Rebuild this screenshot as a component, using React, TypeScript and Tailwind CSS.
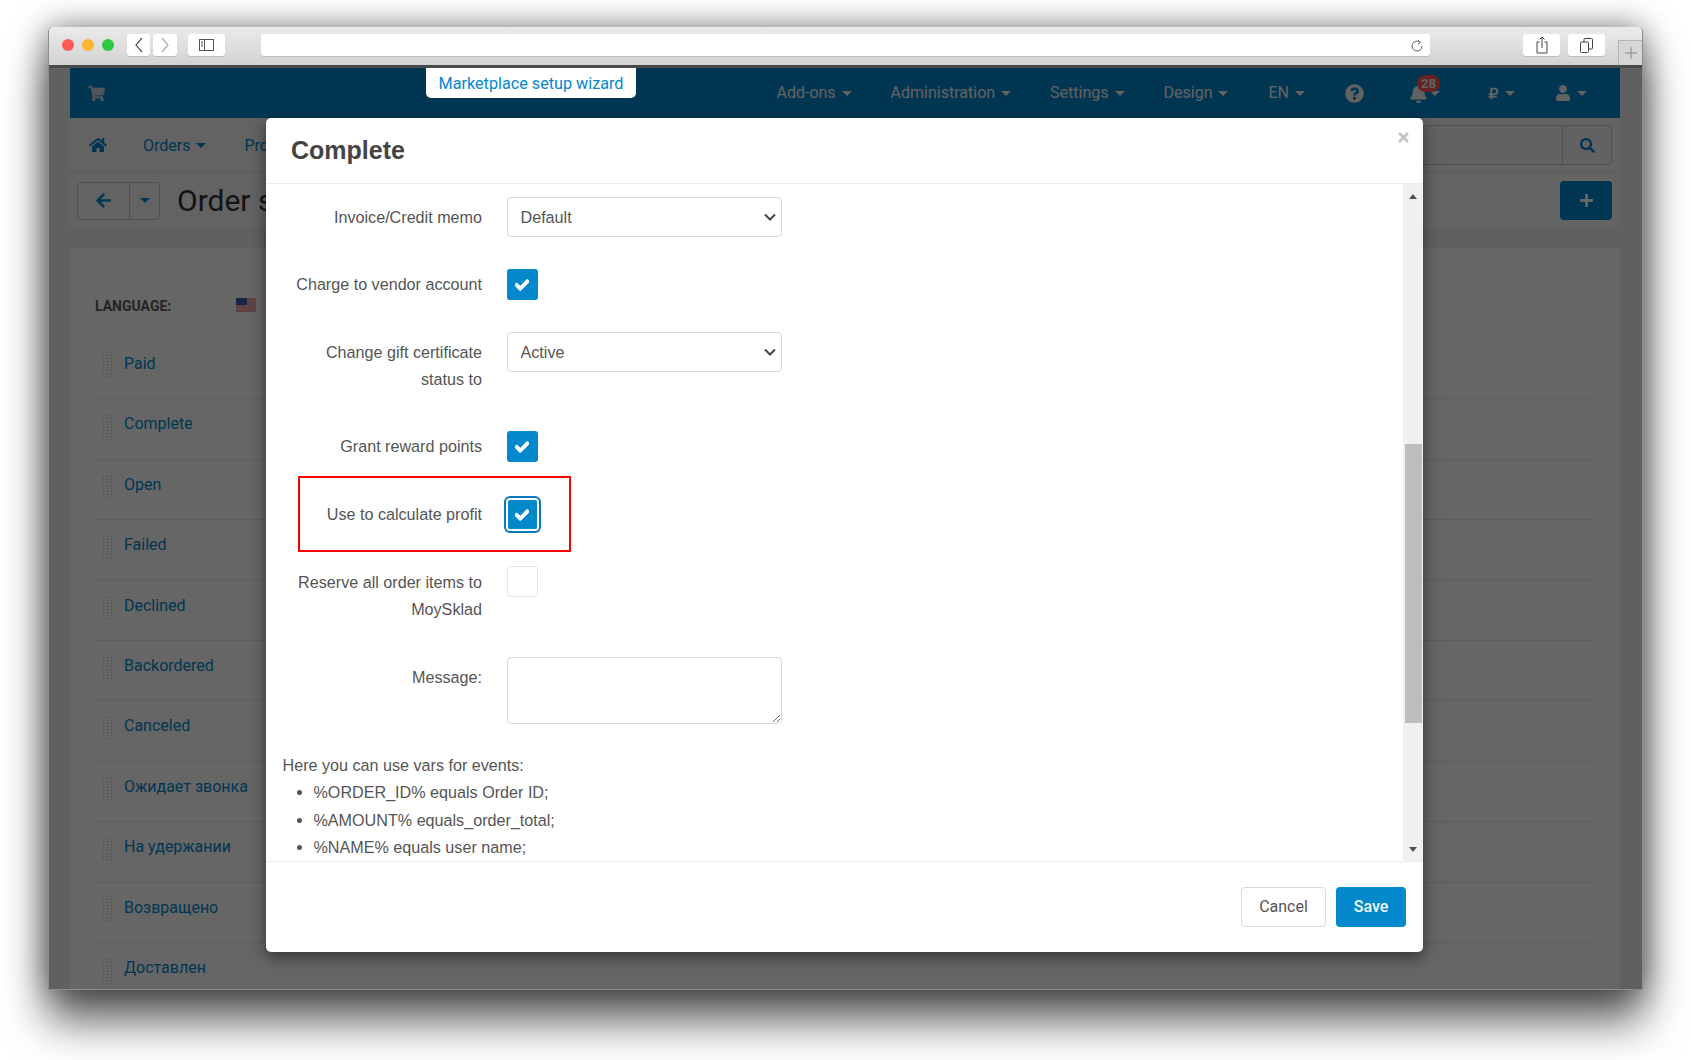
import { FaArrowLeft, FaBell, FaCheck, FaHome, FaPlus, FaQuestionCircle, FaRubleSign, FaSearch, FaShoppingCart, FaTimes, FaUser } from "react-icons/fa";

const ROBOTO = "font-['Roboto',sans-serif]";
const ARIAL = "font-['Liberation_Sans',sans-serif]";

const TOP_NAV = [
  { label: "Add-ons", ml: "ml-0" },
  { label: "Administration", ml: "ml-[39px]" },
  { label: "Settings", ml: "ml-[39px]" },
  { label: "Design", ml: "ml-[39px]" },
  { label: "EN", ml: "ml-[40px]" },
];

const STATUSES = ["Paid", "Complete", "Open", "Failed", "Declined", "Backordered", "Canceled", "Ожидает звонка", "На удержании", "Возвращено", "Доставлен"];

function Caret({ className = "" }: { className?: string }) {
  return <div className={`w-0 h-0 border-x-[5px] border-x-transparent border-t-[5px] border-t-current ${className}`} />;
}

function TrafficLights() {
  return (
    <div className="flex gap-2">
      <div className="w-3 h-3 rounded-full bg-[#fc5b57]" />
      <div className="w-3 h-3 rounded-full bg-[#fdb72f]" />
      <div className="w-3 h-3 rounded-full bg-[#2bc840]" />
    </div>
  );
}

function ToolButton({ className, children }: { className: string; children?: React.ReactNode }) {
  return <div className={`h-[22px] bg-white rounded-[3px] flex items-center justify-center shadow-[0_1px_0_#bdbdbd] ${className}`}>{children}</div>;
}

function BrowserBar() {
  return (
    <div className="relative h-[41px] shrink-0 flex items-start pt-[7px] pl-[13px] bg-gradient-to-b from-[#ebebeb] to-[#d2d2d2] border-b-[3px] border-[#4a4a4a] rounded-t-[5px]">
      <div className="mt-[5px]"><TrafficLights /></div>
      <ToolButton className="w-[23px] ml-[13px]">
        <svg width="10" height="16" viewBox="0 0 10 16" fill="none" stroke="#555" strokeWidth="1.2"><path d="M8 1 2 8l6 7" /></svg>
      </ToolButton>
      <ToolButton className="w-[24px] ml-[3px]">
        <svg width="10" height="16" viewBox="0 0 10 16" fill="none" stroke="#aaa" strokeWidth="1.2"><path d="m2 1 6 7-6 7" /></svg>
      </ToolButton>
      <ToolButton className="w-[37px] ml-[11px]">
        <svg width="15" height="12" viewBox="0 0 15 12" fill="none" stroke="#555"><rect x="0.5" y="0.5" width="14" height="11" /><path d="M5.5 0.5v11M2 3h2M2 5h2M2 7h2" /></svg>
      </ToolButton>
      <ToolButton className="w-[1169px] ml-[36px] justify-end pr-[7px]">
        <svg width="12" height="15" viewBox="0 0 12 15" fill="none" stroke="#666"><path d="M9.5 4.5A5 5 0 1 0 11 8" /><path d="M7 2 9.5 4.5 7 6" /></svg>
      </ToolButton>
      <ToolButton className="w-[37px] ml-[93px]">
        <svg width="12" height="18" viewBox="0 0 12 18" fill="none" stroke="#444"><path d="M3.5 6H1v11h10V6H8.500M6 12V1M3.500 3.500 6 1l2.500 2.500" /></svg>
      </ToolButton>
      <ToolButton className="w-[37px] ml-[8px]">
        <svg width="13" height="15" viewBox="0 0 13 15" fill="none" stroke="#444"><rect x="0.500" y="4" width="8" height="10.500" rx="1" /><path d="M4 4V1.500a1 1 0 0 1 1-1h6.500a1 1 0 0 1 1 1V10a1 1 0 0 1-1 1H9" /></svg>
      </ToolButton>
      <div className="absolute right-0 top-[13px] w-[24px] h-[25px] border-l border-t border-[#b5b5b5] bg-[#d6d6d6] flex items-center justify-center">
        <svg width="12" height="12" viewBox="0 0 12 12" stroke="#888"><path d="M6 0v12M0 6h12" /></svg>
      </div>
    </div>
  );
}

function TopBar() {
  return (
    <div className="h-[50px] shrink-0 bg-[#0388cc] flex items-center pl-[18px] text-[#f4f6f8] text-[16px]">
      <FaShoppingCart className="text-[17px] text-[#c9d6de]" />
      <div className="ml-auto flex items-center pr-[33px]">
        {TOP_NAV.map((item) => (
          <div key={item.label} className={`flex items-center gap-[6px] ${item.ml}`}>
            {item.label}
            <Caret />
          </div>
        ))}
        <FaQuestionCircle className="ml-[40px] text-[19px]" />
        <div className="relative ml-[45px] flex items-center">
          <FaBell className="text-[19px]" />
          <Caret className="ml-[2px]" />
          <div className="absolute left-[8px] -top-[9px] w-[23px] h-[17px] rounded-full bg-[#ff5555] text-[13px] font-bold leading-[17px] text-center">28</div>
        </div>
        <div className="ml-[47px] flex items-center gap-[5px]">
          <FaRubleSign className="text-[13px]" />
          <Caret />
        </div>
        <div className="ml-[40px] flex items-center gap-[6px]">
          <FaUser className="text-[16px]" />
          <Caret />
        </div>
      </div>
    </div>
  );
}

function SubNav() {
  return (
    <div className="h-[55px] shrink-0 bg-[#f7f7f7] border-b border-[#e6e6e6] flex items-center text-[#0388cc] text-[16px] pl-[19px]">
      <FaHome className="text-[18px]" />
      <div className="ml-[36px] pt-[1px] flex items-center gap-[6px]">Orders <Caret /></div>
      <div className="ml-[38px] pt-[1px]">Products</div>
      <div className="ml-auto mr-[8px] flex h-[40px] w-[300px] border border-[#c8c8c8] rounded-[4px] bg-[#f4f4f4]">
        <div className="flex-1" />
        <div className="w-[49px] border-l border-[#c8c8c8] flex items-center justify-center">
          <FaSearch className="text-[15px]" />
        </div>
      </div>
    </div>
  );
}

function TitleRow() {
  return (
    <div className="h-[55px] shrink-0 bg-[#f7f7f7] rounded-b-[5px] flex items-center pl-[7px] pr-[8px]">
      <div className="flex h-[38px] w-[83px] border border-[#c8c8c8] rounded-[4px] text-[#0388cc]">
        <div className="w-[52px] border-r border-[#c8c8c8] flex items-center justify-center"><FaArrowLeft className="text-[17px]" /></div>
        <div className="flex-1 flex items-center justify-center"><Caret /></div>
      </div>
      <h1 className="ml-[17px] text-[30px] text-[#333]">Order statuses</h1>
      <div className="ml-auto w-[52px] h-[39px] rounded-[4px] bg-[#0388cc] flex items-center justify-center text-white">
        <FaPlus className="text-[15px]" />
      </div>
    </div>
  );
}

function GripDots() {
  return (
    <svg width="9" height="24" viewBox="0 0 9 24" fill="#bdbdbd" className="shrink-0 mt-[4px]">
      {[0, 3, 6, 9, 12, 15, 18, 21].flatMap((y) => [0, 4, 8].map((x) => <rect key={`${x}-${y}`} x={x} y={y} width="1" height="1" />))}
    </svg>
  );
}

function StatusPanel() {
  return (
    <div className="mt-[20px] flex-1 bg-white rounded-t-[5px] px-[25px] pt-[47px] overflow-hidden">
      <div className="flex items-center h-[22px] text-[14px] font-bold text-[#5a5a5a]">
        LANGUAGE:
        <svg width="20" height="14" viewBox="0 0 20 14" className="ml-[65px] -mt-[2px]">
          <rect width="20" height="14" fill="#fff" />
          <path d="M0 1h20M0 3h20M0 5h20M0 7h20M0 9h20M0 11h20M0 13h20" stroke="#d9534f" />
          <rect width="11" height="7" fill="#3b5fa8" />
        </svg>
      </div>
      <div className="mt-[22px]">
        {STATUSES.map((name) => (
          <div key={name} className="h-[60.4px] border-b border-[#e5e5e5] flex items-start pl-[8px] pt-[12px] gap-[12px] text-[#0388cc] text-[16px]">
            <GripDots />
            <span className="leading-[26px]">{name}</span>
          </div>
        ))}
      </div>
    </div>
  );
}

function Checkbox({ checked, focused }: { checked?: boolean; focused?: boolean }) {
  const look = checked ? "bg-[#0388cc] text-white" : "bg-white border border-[#e3e6ea]";
  const ring = focused ? "shadow-[0_0_0_1px_#fff_inset,0_0_0_1px_#fff,0_0_0_3px_#0d78bd]" : "";
  return (
    <div className={`w-[31px] h-[31px] rounded-[3px] flex items-center justify-center ${look} ${ring}`}>
      {checked && <FaCheck className="text-[14px] stroke-current stroke-[40]" />}
    </div>
  );
}

function SelectBox({ value }: { value: string }) {
  return (
    <div className="relative w-[275px] h-[40px]">
      <select className="w-full h-full appearance-none pl-[13px] pt-[1px] bg-white border border-[#d2dae3] rounded-[4px] text-[#555]">
        <option>{value}</option>
      </select>
      <svg width="12" height="8" viewBox="0 0 12 8" fill="none" stroke="#444" strokeWidth="2" className="absolute right-[6px] top-[16px] pointer-events-none">
        <path d="m1 1.500 5 5 5-5" />
      </svg>
    </div>
  );
}

function FormRow({ label, className, labelTop, children }: { label: React.ReactNode; className: string; labelTop: string; children: React.ReactNode }) {
  return (
    <div className={`relative flex items-start ${className}`}>
      <label className={`w-[216px] shrink-0 text-right leading-[27px] ${labelTop}`}>{label}</label>
      <div className="ml-[24.500px]">{children}</div>
    </div>
  );
}

function Modal() {
  return (
    <div className={`absolute left-[217px] top-[50px] w-[1157px] h-[834px] bg-white rounded-[5px] flex flex-col text-[#555] text-[16.150px] shadow-[0_5px_15px_rgba(0,0,0,0.5)] ${ARIAL}`}>
      <div className="relative h-[66px] shrink-0 border-b border-[#e9ecef] flex items-center pl-[25px]">
        <h3 className="text-[25px] font-bold text-[#444]">Complete</h3>
        <FaTimes className="absolute right-[12px] top-[12px] text-[15px] text-[#c4c4c4]" />
      </div>
      <div className="flex flex-1 min-h-0">
        <div className="flex-1 min-w-0 overflow-hidden pt-[13px]">
          <FormRow label="Invoice/Credit memo" className="h-[40px]" labelTop="pt-[7px]">
            <SelectBox value="Default" />
          </FormRow>
          <FormRow label="Charge to vendor account" className="h-[31px] mt-[32px]" labelTop="pt-[2px]">
            <Checkbox checked />
          </FormRow>
          <FormRow label={<>Change gift certificate<br />status to</>} className="h-[67px] mt-[32px]" labelTop="pt-[7px]">
            <SelectBox value="Active" />
          </FormRow>
          <FormRow label="Grant reward points" className="h-[31px] mt-[32px]" labelTop="pt-[2px]">
            <Checkbox checked />
          </FormRow>
          <FormRow label="Use to calculate profit" className="h-[31px] mt-[37px]" labelTop="pt-[2px]">
            <Checkbox checked focused />
            <div className="absolute left-[31.500px] -top-[23px] w-[273px] h-[76px] border-[2px] border-[#ff0000] pointer-events-none" />
          </FormRow>
          <FormRow label={<>Reserve all order items to<br />MoySklad</>} className="h-[60px] mt-[36px]" labelTop="pt-[3px]">
            <Checkbox />
          </FormRow>
          <FormRow label="Message:" className="h-[67px] mt-[31px]" labelTop="pt-[7px]">
            <textarea className="block w-[275px] h-[67px] bg-white border border-[#d2dae3] rounded-[4px]" />
          </FormRow>
          <div className="mt-[28px] pl-[16.500px] leading-[27.300px]">
            Here you can use vars for events:
            <ul className="list-disc pl-[31px]">
              <li>%ORDER_ID% equals Order ID;</li>
              <li>%AMOUNT% equals_order_total;</li>
              <li>%NAME% equals user name;</li>
            </ul>
          </div>
        </div>
        <div className="w-[20px] shrink-0 bg-[#f0f0f0] flex flex-col items-center">
          <div className="h-[24px] flex items-center justify-center">
            <div className="w-0 h-0 border-x-[4px] border-x-transparent border-b-[5px] border-b-[#505050]" />
          </div>
          <div className="mt-[236px] h-[279px] w-[17px] bg-[#bdbdbd]" />
          <div className="mt-auto h-[24px] flex items-center justify-center">
            <div className="w-0 h-0 border-x-[4px] border-x-transparent border-t-[5px] border-t-[#505050]" />
          </div>
        </div>
      </div>
      <div className={`h-[91px] shrink-0 border-t border-[#e9ecef] flex items-start justify-end pt-[25px] pr-[17px] gap-[10px] text-[16px] ${ROBOTO}`}>
        <button className="w-[85px] h-[40px] rounded-[4px] bg-white border border-[#d2dae3] text-[#555]">Cancel</button>
        <button className="w-[70px] h-[40px] rounded-[4px] bg-[#0388cc] text-[#f2f8fc] font-medium">Save</button>
      </div>
    </div>
  );
}

export default function App() {
  return (
    <div className={`h-[1060px] overflow-hidden bg-white pl-[48px] pt-[27px] pr-[48px] ${ROBOTO}`}>
      <div className="h-[963px] bg-[#eef0f3] flex flex-col rounded-t-[5px] border-x border-b border-[#8d8d8d] shadow-[0_32px_44px_rgba(0,0,0,0.6),0_0_32px_rgba(0,0,0,0.5)]">
        <BrowserBar />
        <div className="relative flex-1 min-h-0 overflow-hidden">
          <div className="h-full ml-[21px] mr-[22px] flex flex-col">
            <TopBar />
            <SubNav />
            <TitleRow />
            <StatusPanel />
          </div>
          <div className="absolute inset-0 bg-black/60" />
          <div className="absolute left-[377px] top-0 w-[210px] h-[30px] pt-[2px] bg-white rounded-b-[5px] flex items-center justify-center text-[16.200px] text-[#0388cc]">
            Marketplace setup wizard
          </div>
          <Modal />
        </div>
      </div>
    </div>
  );
}
